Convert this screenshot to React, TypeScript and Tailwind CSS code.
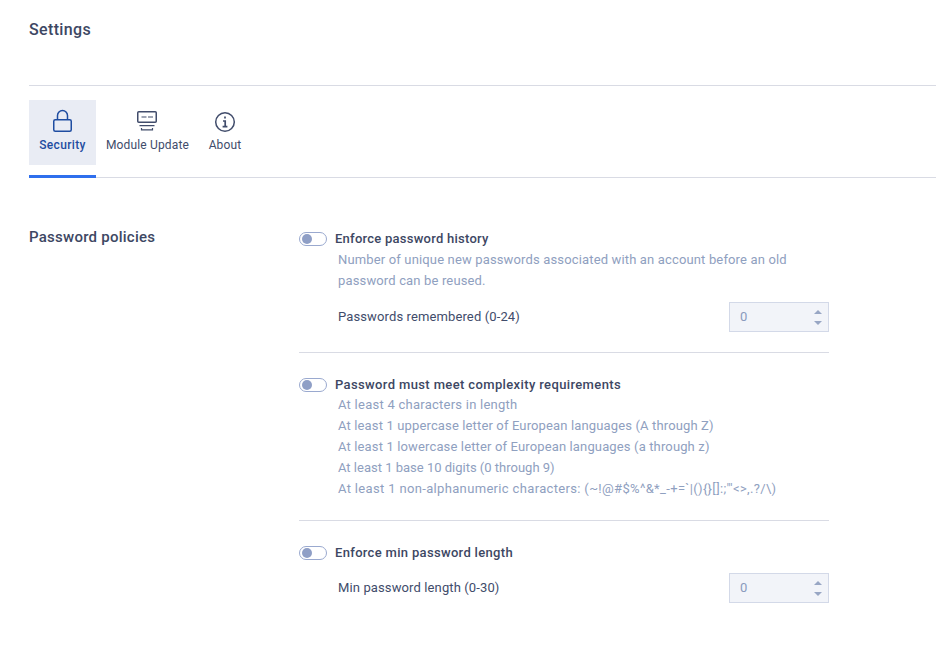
const FONT = "font-['Roboto',sans-serif]";

function Toggle() {
  return (
    <span className="flex h-[14px] w-[28px] shrink-0 items-center rounded-full border border-[#9aa9cf] bg-white">
      <span className="ml-[2px] h-[10px] w-[10px] rounded-full bg-[#8f9fc6]" />
    </span>
  );
}

function NumberBox() {
  return (
    <div className="flex h-[30px] w-[100px] items-center justify-between border border-[#d3d9e8] bg-[#f2f4f9] pl-[10px] pr-[6px] text-[13px] tracking-[0.2px] text-[#8a9bbd]">
      <span>0</span>
      <span className="flex flex-col gap-[7px]">
        <span className="h-0 w-0 border-x-[4px] border-b-[4px] border-x-transparent border-b-[#98a6c4]" />
        <span className="h-0 w-0 border-x-[4px] border-t-[4px] border-x-transparent border-t-[#98a6c4]" />
      </span>
    </div>
  );
}

function Tab({ label, active, icon, width }: { label: string; active?: boolean; icon: React.ReactNode; width: string }) {
  return (
    <div className={`flex h-[78px] flex-col items-center ${width} ${active ? "border-b-[3px] border-[#2f6fed]" : ""}`}>
      <div className={`flex h-[65px] w-full flex-col items-center pt-[9px] ${active ? "bg-[#e9ecf4] text-[#1f4da1]" : "text-[#414c6b]"}`}>
        {icon}
        <span className={`mt-[4px] text-[12px] leading-[16px] ${active ? "font-medium tracking-[0.35px]" : "tracking-[0.15px]"}`}>{label}</span>
      </div>
    </div>
  );
}

export default function App() {
  return (
    <div className={`h-[660px] w-[936px] overflow-hidden bg-white pl-[29px] text-[#414c6b] ${FONT}`}>
      <div className="flex h-[86px] border-b border-[#d9dbe4] pt-[20px]">
        <h1 className="text-[16px] font-medium leading-[20px] tracking-[0.35px] text-[#3d4763]">Settings</h1>
      </div>

      <div className="mt-[14px] flex h-[78px] border-b border-[#d9dbe4]">
        <Tab
          label="Security"
          active
          width="w-[67px]"
          icon={
            <svg width="23" height="24" viewBox="0 0 23 24" fill="none" stroke="currentColor" strokeWidth="1.5">
              <rect x="2.75" y="10.75" width="17.5" height="11.5" rx="1.5" />
              <path d="M6.5 10.5V6.5a5 5 0 0 1 10 0v4" />
            </svg>
          }
        />
        <Tab
          label="Module Update"
          width="w-[103px]"
          icon={
            <svg width="23" height="24" viewBox="0 0 23 24" fill="none" stroke="currentColor" strokeWidth="1.5">
              <rect x="1.75" y="2.75" width="18.5" height="10.5" rx="1" />
              <path d="M5.5 8h5M12 8h5" strokeWidth="1.2" />
              <path d="M3.5 16.7h15M5.5 19v1.8h11V19" strokeWidth="1.2" />
            </svg>
          }
        />
        <Tab
          label="About"
          width="w-[52px]"
          icon={
            <svg width="24" height="24" viewBox="0 0 24 24" fill="none" stroke="currentColor" strokeWidth="1.5">
              <circle cx="12" cy="13" r="9.3" />
              <path d="M12 7.6v2M10 12h2.2v5.4M9.6 17.6h4.8" strokeWidth="1.7" />
            </svg>
          }
        />
      </div>

      <div className="mt-[49px] flex">
        <h2 className="w-[270px] text-[15px] font-medium leading-[20px] tracking-[0.25px] text-[#3d4763]">Password policies</h2>

        <div className="mt-[2px] w-[530px]">
          <section className="border-b border-[#d9dbe4] pb-[20px]">
            <div className="flex h-[20px] items-center gap-[8px]">
              <Toggle />
              <span className="text-[13px] font-medium tracking-[0.25px] text-[#3d4763]">Enforce password history</span>
            </div>
            <p className="ml-[39px] w-[470px] text-[13px] leading-[21px] tracking-[0.15px] text-[#8fa0c0]">
              Number of unique new passwords associated with an account before an old password can be reused.
            </p>
            <div className="mt-[11px] flex items-center justify-between pl-[39px]">
              <span className="text-[13px] tracking-[0.12px]">Passwords remembered (0-24)</span>
              <NumberBox />
            </div>
          </section>

          <section className="border-b border-[#d9dbe4] pb-[21px] pt-[22px]">
            <div className="flex h-[20px] items-center gap-[8px]">
              <Toggle />
              <span className="text-[13px] font-medium tracking-[0.37px] text-[#3d4763]">Password must meet complexity requirements</span>
            </div>
            <ul className="ml-[39px] -mt-[1px] text-[13px] leading-[21px] tracking-[0.14px] text-[#8fa0c0]">
              <li className="tracking-[0.25px]">At least 4 characters in length</li>
              <li>At least 1 uppercase letter of European languages (A through Z)</li>
              <li>At least 1 lowercase letter of European languages (a through z)</li>
              <li className="tracking-[0px]">At least 1 base 10 digits (0 through 9)</li>
              <li className="tracking-[0.34px]">{"At least 1 non-alphanumeric characters: (~!@#$%^&*_-+=`|(){}[]:;\"'<>,.?/\\)"}</li>
            </ul>
          </section>

          <section className="pt-[22px]">
            <div className="flex h-[20px] items-center gap-[8px]">
              <Toggle />
              <span className="text-[13px] font-medium tracking-[0.32px] text-[#3d4763]">Enforce min password length</span>
            </div>
            <div className="mt-[10px] flex items-center justify-between pl-[39px]">
              <span className="text-[13px] tracking-[0.12px]">Min password length (0-30)</span>
              <NumberBox />
            </div>
          </section>
        </div>
      </div>
    </div>
  );
}
